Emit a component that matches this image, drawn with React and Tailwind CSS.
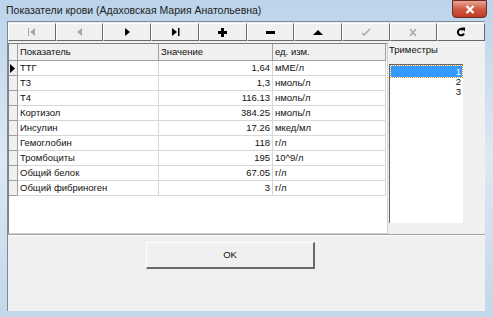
import React from "react";

const rows = [
  ["ТТГ", "1,64", "мМЕ/л"],
  ["Т3", "1,3", "нмоль/л"],
  ["Т4", "116.13", "нмоль/л"],
  ["Кортизол", "384.25", "нмоль/л"],
  ["Инсулин", "17.26", "мкед/мл"],
  ["Гемоглобин", "118", "г/л"],
  ["Тромбоциты", "195", "10^9/л"],
  ["Общий белок", "67.05", "г/л"],
  ["Общий фибриноген", "3", "г/л"],
];

const dis = "#a8a8a8";

const icons = [
  // first
  <svg width="10" height="8" viewBox="0 0 10 8" key="f">
    <rect x="1" y="0" width="1" height="8" fill={dis} />
    <path d="M8 0 L3 4 L8 8 Z" fill={dis} />
  </svg>,
  // prior
  <svg width="8" height="8" viewBox="0 0 8 8" key="p">
    <path d="M6 0 L1 4 L6 8 Z" fill={dis} />
  </svg>,
  // next
  <svg width="8" height="8" viewBox="0 0 8 8" key="n">
    <path d="M2 0 L7 4 L2 8 Z" fill="#000" />
  </svg>,
  // last
  <svg width="10" height="8" viewBox="0 0 10 8" key="l">
    <path d="M2 0 L7 4 L2 8 Z" fill="#000" />
    <rect x="8" y="0" width="1.5" height="8" fill="#000" />
  </svg>,
  // insert
  <svg width="9" height="9" viewBox="0 0 9 9" key="i">
    <rect x="3" y="0" width="3" height="9" fill="#000" />
    <rect x="0" y="3" width="9" height="3" fill="#000" />
  </svg>,
  // delete
  <svg width="9" height="9" viewBox="0 0 9 9" key="d">
    <rect x="0" y="3" width="9" height="3" fill="#000" />
  </svg>,
  // edit
  <svg width="10" height="7" viewBox="0 0 10 7" key="e">
    <path d="M0 6 L5 1 L10 6 Z" fill="#000" />
  </svg>,
  // post
  <svg width="10" height="8" viewBox="0 0 10 8" key="s">
    <path d="M1 5 L3 7 L9 1" stroke={dis} strokeWidth="1.5" fill="none" />
  </svg>,
  // cancel
  <svg width="8" height="9" viewBox="0 0 8 9" key="c">
    <path d="M1 1 L7 8 M7 1 L1 8" stroke={dis} strokeWidth="1.5" fill="none" />
  </svg>,
  // refresh
  <svg width="10" height="10" viewBox="0 0 10 10" key="r">
    <path d="M7.5 3 A3.2 3.2 0 1 0 8 6.5" stroke="#000" strokeWidth="2" fill="none" />
    <path d="M5 0.5 L9 0.5 L9 4.5 Z" fill="#000" />
  </svg>,
];

export default function App() {
  return (
    <div
      className="w-[493px] h-[317px] overflow-hidden flex flex-col bg-gradient-to-b from-[#bcd4ea] via-[#dde8f3] to-[#c2d7ea] text-black"
      style={{ fontFamily: '"Liberation Sans", Arial, sans-serif' }}
    >
      {/* title bar */}
      <div className="h-[21px] flex items-start relative">
        <span className="ml-[6px] mt-[4px] text-[10.5px] leading-[12px] text-[#222]">
          Показатели крови (Адаховская Мария Анатольевна)
        </span>
        <div className="absolute left-[452px] top-0 w-[35px] h-[18px] rounded-b-[4px] border border-[#6b2a23] bg-gradient-to-b from-[#e8a595] via-[#cf5a45] to-[#c23b25] flex items-center justify-center">
          <svg width="10" height="9" viewBox="0 0 10 9">
            <path d="M1.5 1 L8.5 8 M8.5 1 L1.5 8" stroke="#fff" strokeWidth="2.2" />
          </svg>
        </div>
      </div>

      {/* client */}
      <div className="ml-[7px] mr-[8px] h-[290px] bg-[#f0f0f0] border-l border-t border-[#7a8a99] flex flex-col text-[9.5px] leading-[12px] text-[#111]">
        {/* toolbar */}
        <div className="flex mt-[1px] w-[477px] h-[18px]">
          {icons.map((ic, i) => (
            <div
              key={i}
              className="flex-1 flex items-center justify-center border-t border-l border-white border-r border-b border-r-[#696969] border-b-[#696969] bg-[#f0f0f0]"
            >
              {ic}
            </div>
          ))}
        </div>

        {/* main */}
        <div className="flex mt-[2px] h-[191px]">
          <div className="w-[380px] h-full bg-white border border-[#828282] border-r-[#d4d4d4] border-b-[#d4d4d4] flex flex-col">
            {/* header */}
            <div className="flex h-[17px] bg-[#f0f0f0]">
              <div className="w-[9px] border-r border-b border-[#a0a0a0]" />
              <div className="w-[141px] border-r border-b border-[#a0a0a0] pl-[2px] flex items-center">
                Показатель
              </div>
              <div className="w-[114px] border-r border-b border-[#a0a0a0] pl-[2px] flex items-center">
                Значение
              </div>
              <div className="w-[113px] border-r border-b border-[#a0a0a0] pl-[2px] flex items-center">
                ед. изм.
              </div>
            </div>
            {rows.map((r, i) => (
              <div key={i} className="flex h-[15px]">
                <div className="w-[9px] bg-[#f0f0f0] border-r border-b border-[#a0a0a0] flex items-center justify-start">
                  {i === 0 && (
                    <svg width="5" height="9" viewBox="0 0 5 9" className="ml-[1px]">
                      <path d="M0 0 L5 4.5 L0 9 Z" fill="#000" />
                    </svg>
                  )}
                </div>
                <div className="w-[141px] border-r border-b border-[#d8d8d8] pl-[2px] flex items-center">
                  {r[0]}
                </div>
                <div className="w-[114px] border-r border-b border-[#d8d8d8] pr-[2px] flex items-center justify-end">
                  {r[1]}
                </div>
                <div className="w-[113px] border-r border-b border-[#d8d8d8] pl-[2px] flex items-center">
                  {r[2]}
                </div>
              </div>
            ))}
          </div>

          {/* right panel */}
          <div className="flex-1 flex flex-col">
            <div className="pl-[1px] mt-[1px] h-[12px]">Триместры</div>
            <div className="ml-[1px] mt-[8px] w-[74px] h-[159px] bg-white border-l border-t border-[#646464] pt-[1px]">
              <div className="h-[11px] mx-[1px] bg-[#3399ff] text-white text-right pr-[1px] leading-[11px] outline-1 outline-dotted outline-[#d8964a]">
                1
              </div>
              <div className="h-[10px] text-right pr-[2px] leading-[10px]">2</div>
              <div className="h-[10px] text-right pr-[2px] leading-[10px]">3</div>
            </div>
          </div>
        </div>

        <div className="h-[1px] bg-[#a0a0a0]" />
        <div className="h-[1px] bg-white" />

        {/* bottom */}
        <div className="flex">
          <div className="ml-[138px] mt-[6px] w-[169px] h-[27px] bg-[#f0f0f0] border-t border-l border-white border-r-2 border-b-2 border-r-[#696969] border-b-[#696969] flex items-center justify-center">
            OK
          </div>
        </div>
      </div>
    </div>
  );
}
